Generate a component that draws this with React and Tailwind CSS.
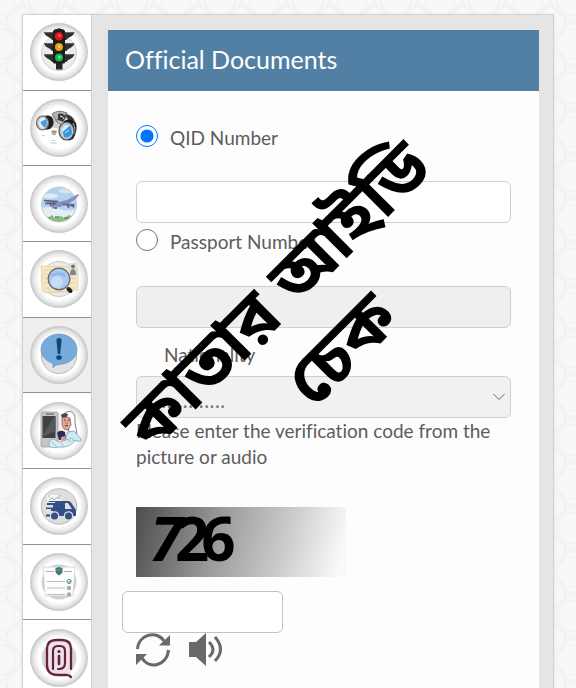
import React from "react";

function TrafficLight() {
  return (
    <svg viewBox="0 0 58 58" className="size-full" aria-hidden="true">
      <circle cx="29" cy="30" r="17.5" fill="#ececec" stroke="#c4c4c4" strokeWidth="0.8" />
      <rect x="26" y="40" width="6.5" height="6.5" fill="#262626" />
      {[9, 20, 31].map((y) => (
        <g key={y} fill="#2e2e2e">
          <path d={`M14 ${y} h12 v8 h-4 c-1-3-7-3-8-8z`} />
          <path d={`M44.500 ${y} h-12 v8 h4 c1-3 7-3 8-8z`} />
          <path d={`M15 ${y + 0.6}h9`} stroke="#777" strokeWidth="0.8" />
          <path d={`M35 ${y + 0.6}h9`} stroke="#777" strokeWidth="0.8" />
        </g>
      ))}
      <path d="M23 8 q1-2 4-2 q2-1.500 4 0 q3 0 4 2 v31 q0 1.500-1.500 1.500 h-9 q-1.500 0-1.500-1.500z" fill="#1d1d1d" />
      <circle cx="29" cy="13.300" r="4.200" fill="#e01414" />
      <circle cx="29" cy="24" r="4" fill="#dfa512" />
      <circle cx="29" cy="34.500" r="4" fill="#14b84a" />
      <circle cx="29.500" cy="12.500" r="1.600" fill="#ff5a4c" />
      <circle cx="29.500" cy="23.300" r="1.600" fill="#f7cd4c" />
      <circle cx="29.500" cy="34" r="1.600" fill="#5fe88d" />
    </svg>
  );
}

function Binoculars() {
  return (
    <svg viewBox="0 0 58 58" className="size-full" aria-hidden="true">
      <path d="M10 17 Q16 15 22 17 Q26 11 34 13 Q44 16 46 25 L30 30 L20 28z" fill="#d0d0d0" />
      <path d="M15 17 Q20 15 23 20 Q25 26 20 30 L15 31 Q19 24 15 17z" fill="#1f1f1f" />
      <path d="M22 15 Q28 10 37 14 L34 20 L26 21z" fill="#b2b2b2" stroke="#666" strokeWidth="0.8" />
      <path d="M28 15 q5-2 8 3 l-3 5 -5-2z" fill="#3b3b3b" />
      <path d="M35 15 Q42 16 45 22 L38 21z" fill="#3b3b3b" />
      <path d="M30 17 q3 0 4 3" stroke="#eee" strokeWidth="1" fill="none" />
      <path d="M25 20 Q27 24 31 25" stroke="#888" strokeWidth="1.2" fill="none" />
      <path d="M34 22 Q41 18 46 24 Q48 32 43 40 L38 42 Q45 33 41 26 Q38 23 33 25z" fill="#181818" />
      <path d="M43 24 q3 5 1 11" stroke="#a5a5a5" strokeWidth="1.2" fill="none" />
      <ellipse cx="12.5" cy="24" rx="6" ry="7" fill="#c9c9c9" stroke="#6b6b6b" strokeWidth="1.2" />
      <ellipse cx="13" cy="24" rx="4" ry="5" fill="#e8f4fb" />
      <path d="M10.500 23 L16 20 Q18 24 16 28 Q12 29 10.500 23z" fill="#469edb" />
      <ellipse cx="36.500" cy="32" rx="7.500" ry="9" fill="#bdbdbd" stroke="#4c4c4c" strokeWidth="1.200" />
      <ellipse cx="37" cy="32.500" rx="5.500" ry="6.800" fill="#d8eefb" />
      <path d="M32.500 33 L40 26.500 Q43 31 41.500 36 Q38 40 34 38z" fill="#3697dc" />
      <path d="M35 34 l4-3" stroke="#8ccbf4" strokeWidth="1.500" />
      <path d="M21 31.500 h6 l-1 4 -2 1 -2-1z" fill="#9db4a8" />
      <path d="M22.500 32.500 h3" stroke="#c55" />
      <path d="M12 36 l3 1 M22 41.500 h3 M20.500 44 h6" stroke="#b5b5b5" strokeWidth="0.800" />
    </svg>
  );
}

function Airplane() {
  return (
    <svg viewBox="0 0 58 58" className="size-full" aria-hidden="true">
      <clipPath id="sky-disc"><circle cx="29" cy="29.500" r="17.500" /></clipPath>
      <g clipPath="url(#sky-disc)">
        <rect width="58" height="58" fill="#b3d3ec" />
        <ellipse cx="20" cy="21" rx="8" ry="2.500" fill="#deecf6" />
        <ellipse cx="36" cy="16" rx="7" ry="2" fill="#d5e6f3" />
        <path d="M8 34 q12-4 22 0 t22-2 v14 H8z" fill="#e3edf3" />
        <path d="M10 43 l5-2 3 2 4-3 3 3 6-2 3 2 5-3 9 3 v8 H10z" fill="#8dbb78" />
        <path d="M16 43 h4 M25 42 h4 M34 43 h5" stroke="#5f8f62" strokeWidth="1.500" />
      </g>
      <circle cx="29" cy="29.500" r="17.500" fill="none" stroke="#b5c8d4" strokeWidth="0.800" />
      <path d="M15 26 l13 1 9-2 L48 19 l1 1 -3 4 -8 5 -8 3 -9-1z" fill="#8c8fbb" />
      <path d="M14 25.500 l14 1 M15 28.500 l11 0" stroke="#575c8c" strokeWidth="1.400" />
      <path d="M20 27 l1 5 M24 27 l-1 6 -1 0" stroke="#575c8c" strokeWidth="0.900" fill="none" />
      <path d="M32 28 l13 1 -1 3 -11-2z" fill="#6e719f" />
      <path d="M37 30 l2 3 M42 30 l2 2.500" stroke="#454a78" strokeWidth="1.200" fill="none" />
      <path d="M24 33 h3" stroke="#454a78" strokeWidth="1.500" />
    </svg>
  );
}

function DocumentSearch() {
  return (
    <svg viewBox="0 0 58 58" className="size-full" aria-hidden="true">
      <circle cx="29" cy="29" r="17.500" fill="#ebebeb" stroke="#c8c8c8" />
      <path d="M11 16 l35 1 2 1 v22 l-9 1 -23 2 -4-2z" fill="#f3e8c3" stroke="#ddd0a0" strokeWidth="0.700" />
      <path d="M14 20 h23 M14 24 h30 M14 28 h31 M14 33 h31 M14 38 h30 M18 42 h20" stroke="#ddd2ab" strokeWidth="1" />
      <rect x="39" y="13" width="8" height="13" fill="#dedede" />
      <circle cx="43" cy="16.500" r="2" fill="#777" />
      <path d="M40 25 q0-6 3-6 t3 6z" fill="#858585" />
      <circle cx="29" cy="29" r="10.800" fill="#a9c9ee" stroke="#666" strokeWidth="1.200" />
      <circle cx="27" cy="32" r="6" fill="#c6dcf5" />
      <path d="M22 26 q7-5 13 0" stroke="#8fb6e4" strokeWidth="2.500" fill="none" />
      <path d="M38.500 39 l2 2" stroke="#222" strokeWidth="4" strokeLinecap="round" />
    </svg>
  );
}

function Notice() {
  return (
    <svg viewBox="0 0 58 58" className="size-full" aria-hidden="true">
      <circle cx="29" cy="30" r="17.500" fill="#e3e3e3" stroke="#b9b9b9" />
      <path d="M29 8 C39 8 47 15 47 23.500 S39 38 29 38.500 Q25 38.500 23 42 V37.500 C16 35 11 30 11 23.500 C11 15 19 8 29 8z" fill="#75abdc" stroke="#6792bb" strokeWidth="0.700" />
      <path d="M26.400 14 Q26.400 12 29 12 T31.600 14 L30.200 28 h-2.400z" fill="#12466d" />
      <ellipse cx="29" cy="31.500" rx="2.700" ry="2.300" fill="#12466d" />
    </svg>
  );
}

function MobileUser() {
  return (
    <svg viewBox="0 0 58 58" className="size-full" aria-hidden="true">
      <circle cx="29" cy="29" r="17.500" fill="#f1f1f1" />
      <rect x="11" y="10" width="17" height="35" rx="1.500" fill="#c4c4c4" stroke="#999" strokeWidth="0.700" />
      <rect x="12.500" y="14" width="13" height="22" fill="#404145" />
      <path d="M12.500 33 L24 15 h1.500 v14 l-13 6z" fill="#56575b" />
      <path d="M16 12 h8" stroke="#555" />
      <path d="M33 13 Q37 8 42 10 Q46 13 45 21 L47 32 L39 30 L37 16z" fill="#fff" stroke="#666" strokeWidth="0.800" />
      <path d="M31 13 q3-3 7-1 l-1 3 -5 1z" fill="#4a4648" />
      <path d="M32 16 q5-2 8 0 l1 7 -3 5 -4-1 -2-4z" fill="#e2a893" stroke="#6e4b45" strokeWidth="0.600" />
      <path d="M34 18 h1.500 M38 18 h1.500 M35 24 q2-1 3 0" stroke="#333" strokeWidth="1" fill="none" />
      <circle cx="36.500" cy="21" r="1.600" fill="#d08b7c" />
      <path d="M38 30 l6-1 7 8 q1 3-3 2 l-13-1z" fill="#cfe8f1" stroke="#7c9dab" strokeWidth="0.800" />
      <path d="M27 31 q3-4 8-1 l1 7 -7 1z" fill="#2b2b4b" />
      <path d="M31 35 l4-1 1 4 -5 1z" fill="#d99990" />
      <path d="M19 44 Q19 37 24 37 Q27 40 30 40 L42 36 L44 40 Q38 46 29 45 Q24 47 19 44z" fill="#d8eef5" stroke="#86aebe" strokeWidth="0.800" />
      <path d="M22 40 l5 5 M31 41 l3 3 M38 38 l3 2" stroke="#86aebe" strokeWidth="0.800" />
    </svg>
  );
}

function DeliveryVan() {
  return (
    <svg viewBox="0 0 58 58" className="size-full" aria-hidden="true">
      <circle cx="29" cy="29.500" r="17.700" fill="#dedede" stroke="#b5b5b5" />
      <path d="M17 18 h15 v6 H17z" fill="#f4f4f4" />
      <path d="M18 19 h2 m8 0 h4 M19 23 q3-4 5 0 q3-4 7-1" stroke="#aaa" fill="none" />
      <path d="M18 24 h20 q2 0 3 1.500 l4 6 q1 1 1 3 V39 H25 q0-4-4-4 v-3 h-5 v-2 h7 v-2 h-6 v-2 h4z" fill="#344f86" />
      <path d="M16 25.500 h9 M16 30 h7 M16 34.500 h7" stroke="#e4e6ec" strokeWidth="1.200" />
      <path d="M35 26 h3 l4 6 h-7z" fill="#dce1ea" />
      <circle cx="24.500" cy="39" r="4.800" fill="#dedede" />
      <circle cx="38.500" cy="39" r="4.800" fill="#dedede" />
      <circle cx="24.500" cy="39" r="3.500" fill="#344f86" />
      <circle cx="38.500" cy="39" r="3.500" fill="#344f86" />
      <path d="M16 38.500 h4" stroke="#344f86" strokeWidth="2" />
    </svg>
  );
}

function Checklist() {
  return (
    <svg viewBox="0 0 58 58" className="size-full" aria-hidden="true">
      <circle cx="29" cy="29" r="17.500" fill="#d2d2d2" />
      <path d="M13 14 h32 l-2 29 H15z" fill="#fdfdfd" stroke="#c5c5c5" strokeWidth="0.600" />
      <path d="M16 18.500 h8 M34 18.500 h8" stroke="#a8a8a8" strokeWidth="0.900" />
      <path d="M25.500 15 l3.500-1 3.500 1 v4 q-1 2-3.500 3.500 q-2.500-1.500-3.500-3.500z" fill="#3f7a73" />
      <path d="M26 17 h5" stroke="#6d87a8" />
      <path d="M17 28.500 h18 M17 35 h18 M17 41.500 h18" stroke="#bdbdbd" strokeWidth="1.200" />
      <circle cx="39" cy="28.500" r="2.100" fill="#edfaf5" stroke="#539b7d" />
      <path d="M38 28.500 l1 1 2-2" stroke="#34805f" fill="none" />
      <circle cx="39" cy="35" r="2.200" fill="#aaa" />
      <circle cx="39" cy="41.500" r="2.200" fill="#aaa" />
    </svg>
  );
}

function DigitalId() {
  return (
    <svg viewBox="0 0 58 58" className="size-full" aria-hidden="true">
      <circle cx="29" cy="29" r="17.500" fill="#d7d3d5" />
      <path d="M41 40 V20 Q41 11 32 11 H26 Q17 11 17 20 V36 Q17 46 28 46 H35 Q39 45.500 41 48" fill="#eee2e7" stroke="#65213f" strokeWidth="2.300" strokeLinecap="round" />
      <path d="M23 40 V22 Q23 17 28 17 H30 Q35 17 35 22 V34 Q35 40 29 40 H28" fill="none" stroke="#65213f" strokeWidth="2.200" strokeLinecap="round" />
      <path d="M29 27 v8" stroke="#65213f" strokeWidth="2.600" strokeLinecap="round" />
      <circle cx="29" cy="22.500" r="1.600" fill="#65213f" />
    </svg>
  );
}

const services = [
  { name: "Traffic services", Icon: TrafficLight },
  { name: "Inquiries", Icon: Binoculars },
  { name: "Travel services", Icon: Airplane },
  { name: "Document search", Icon: DocumentSearch },
  { name: "Official documents", Icon: Notice, active: true },
  { name: "Mobile services", Icon: MobileUser },
  { name: "Delivery services", Icon: DeliveryVan },
  { name: "Certificates", Icon: Checklist },
  { name: "Digital ID", Icon: DigitalId },
];

function Backdrop() {
  return (
    <svg className="absolute inset-0 size-full" aria-hidden="true">
      <pattern id="lattice" width="44" height="44" patternUnits="userSpaceOnUse">
        <g fill="none" stroke="#f2f2f2" strokeWidth="2">
          <circle cx="22" cy="22" r="15" />
          <circle cx="0" cy="0" r="15" />
          <circle cx="44" cy="0" r="15" />
          <circle cx="0" cy="44" r="15" />
          <circle cx="44" cy="44" r="15" />
          <path d="M22 0 L28 11 L44 22 L28 33 L22 44 L16 33 L0 22 L16 11z" />
        </g>
      </pattern>
      <rect width="100%" height="100%" fill="url(#lattice)" />
    </svg>
  );
}

const field = "h-[42px] w-full rounded-md border border-[#cfcfcf] px-2";
const overlay =
  "pointer-events-none absolute -rotate-45 whitespace-nowrap text-center font-['Noto_Sans_Bengali','Noto_Sans',sans-serif] text-[70px] font-bold leading-[80px] text-black";

export default function App() {
  return (
    <div className="relative h-screen overflow-hidden bg-[#f8f8f8] px-[22px] pt-[14px] font-[Lato,sans-serif] text-[19px] leading-[26px] text-[#5c5c5e] [font-variant-ligatures:none]">
      <Backdrop />
      <div className="relative flex border border-l-0 border-[#d2d2d2] bg-[#e5e5e5] shadow-sm">
        <nav className="grid h-[681px] w-[70px] shrink-0 grid-rows-9 border-x border-[#cfcfcf]" aria-label="Services">
          {services.map(({ name, Icon, active }) => (
            <a
              key={name}
              href="#"
              aria-label={name}
              className={`flex items-center justify-center border-b border-[#8496a3] pl-1 ${active ? "bg-[#eeeeee]" : "bg-white"}`}
            >
              <span className="size-[58px] rounded-full bg-[radial-gradient(circle,#ffffff_50%,#e6e6e6_62%,#c2c2c2_71%)]">
                <Icon />
              </span>
            </a>
          ))}
        </nav>

        <main className="ml-4 mr-[14px] mt-[15px] flex-1 bg-[#fdfdfd]">
          <h1 className="bg-[#527fa4] px-[17px] pb-4 pt-[13px] text-[25px] leading-8 text-white">Official Documents</h1>
          <form className="px-7 pt-[34px]">
            <div className="flex items-start gap-3">
              <input id="qid" type="radio" name="document" defaultChecked className="size-[22px] shrink-0" />
              <label htmlFor="qid">QID Number</label>
            </div>
            <input aria-label="QID Number" type="text" className={`${field} mt-[30px] bg-white`} />
            <div className="mt-[6px] flex items-start gap-3">
              <input id="passport" type="radio" name="document" className="size-[22px] shrink-0" />
              <label htmlFor="passport">Passport Number</label>
            </div>
            <input aria-label="Passport Number" type="text" disabled className={`${field} mt-[31px] bg-[#efefef]`} />
            <label htmlFor="nationality" className="mt-[14px] block pl-7">Nationality</label>
            <div className="relative mt-2">
              <select id="nationality" disabled className={`${field} appearance-none bg-[#f1f1f1] pt-2 font-['Noto_Sans',sans-serif] text-[20px] text-[#777777] opacity-100`}>
                <option>...............</option>
              </select>
              <svg viewBox="0 0 12 8" className="pointer-events-none absolute right-[6px] top-[17px] h-2 w-3" fill="none" stroke="#666" aria-hidden="true">
                <path d="M0.500 1 L6 6.500 L11.500 1" />
              </svg>
            </div>
            <label htmlFor="code" className="block">Please enter the verification code from the picture or audio</label>
            <div className="mt-[37px] flex h-[70px] w-[210px] bg-[linear-gradient(105deg,#4d4d4d_0%,#999999_38%,#cccccc_70%,#fafafa_96%)] pl-[14px] font-['Open_Sans',sans-serif] text-[60px] font-bold leading-[62px] text-black">
              <span className="italic">7</span>
              <span className="-ml-2">2</span>
              <span className="-ml-2">6</span>
            </div>
            <input id="code" type="text" className="-ml-[14px] mt-[14px] block h-[42px] w-[161px] rounded-md border border-[#c2c2c2] bg-white px-2" />
            <div className="flex gap-[19px]">
              <button type="button" aria-label="New code">
                <svg viewBox="0 0 34 34" className="size-[34px]" fill="none" stroke="#696969" strokeWidth="3" aria-hidden="true">
                  <path d="M1.500 16 C2.500 1 21 -3 28 8" />
                  <path d="M32.500 17 C31 33 13 37 6 25" />
                  <path d="M34 2 V12.500 H23z M0 32 V21 H11z" fill="#696969" stroke="none" />
                </svg>
              </button>
              <button type="button" aria-label="Play code">
                <svg viewBox="0 0 34 34" className="size-[34px]" fill="none" stroke="#696969" strokeWidth="3" aria-hidden="true">
                  <path d="M0 9 H7 L17 0 V33 L7 24 H0z" fill="#696969" stroke="none" />
                  <path d="M20 9 Q28 16.500 20 24 M26 4 Q37 16.500 26 28" />
                </svg>
              </button>
            </div>
          </form>
        </main>
      </div>

      <p className={`${overlay} left-[81px] top-[260px] w-[400px]`} lang="bn">
        কাতার আইডি
      </p>
      <p className={`${overlay} left-[246px] top-[314px] w-[200px]`} lang="bn">
        চেক
      </p>
    </div>
  );
}
